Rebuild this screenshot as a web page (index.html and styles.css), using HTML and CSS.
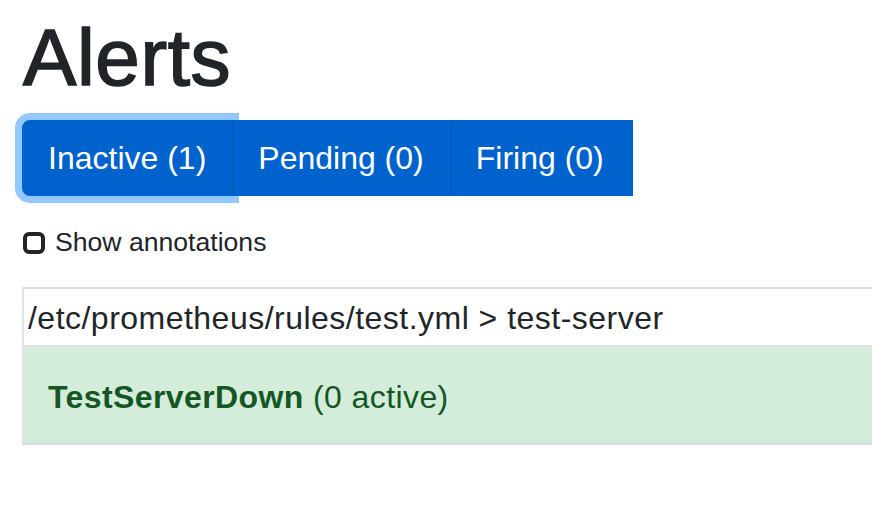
FILE: index.html
```html
<!DOCTYPE html>
<html>
<head>
<meta charset="utf-8">
<link rel="stylesheet" href="styles.css">
</head>
<body>
<main class="page">
  <h1 class="title">Alerts</h1>
  <div class="btn-group">
    <button class="btn btn-focus">Inactive (1)</button>
    <button class="btn">Pending (0)</button>
    <button class="btn btn-last">Firing (0)</button>
  </div>
  <label class="check">
    <span class="check-box"></span>
    <span class="check-label">Show annotations</span>
  </label>
  <table class="rules">
    <tbody>
      <tr class="group-row">
        <td class="group-cell">/etc/prometheus/rules/test.yml &gt; test-server</td>
      </tr>
      <tr class="alert-row">
        <td class="alert-cell"><strong class="alert-name">TestServerDown</strong> (0 active)</td>
      </tr>
    </tbody>
  </table>
</main>
</body>
</html>
```

FILE: styles.css
```css
html, body {
  margin: 0;
  padding: 0;
  overflow: hidden;
  background: #fff;
}

body {
  font-family: "Liberation Sans", Arial, sans-serif;
  color: #212529;
}

.page {
  padding: 10px 0 0 22px;
}

.title {
  margin: 0 0 14px 1px;
  font-size: 80px;
  font-weight: 400;
  line-height: 96px;
  color: #212529;
  -webkit-text-stroke: 1.6px #212529;
  letter-spacing: 0.6px;
}

.btn-group {
  display: flex;
  width: max-content;
}

.btn {
  font-family: inherit;
  font-size: 32px;
  line-height: 48px;
  padding: 12px 24px;
  color: #fff;
  background: #0062cc;
  border: 2px solid #0062cc;
  border-left-color: #005cbf;
  margin: 0;
  cursor: pointer;
  border-radius: 0;
}

.btn-focus {
  border-left-color: #0062cc;
  border-radius: 8px 0 0 8px;
  box-shadow: 0 0 0 7px rgba(38, 143, 255, 0.5);
}

.btn-last {
  padding-right: 27px;
}

.check {
  display: flex;
  align-items: center;
  margin: 35px 0 0 1px;
  height: 23px;
}

.check-box {
  box-sizing: border-box;
  width: 22px;
  height: 22px;
  border: 4px solid #212529;
  border-radius: 6px;
  background: #fff;
}

.check-label {
  margin-left: 10px;
  font-size: 26.6px;
  line-height: 23px;
  color: #212529;
}

.rules {
  margin-top: 33px;
  width: 900px;
  border-collapse: collapse;
}

.rules td {
  border: 2px solid #dee2e6;
  border-right: none;
  text-align: left;
}

.group-cell {
  padding: 5px 4px 3px 4px;
  font-size: 32px;
  line-height: 48px;
  color: #212529;
  letter-spacing: 0.48px;
}

.alert-row {
  background: #d4edda;
}

.alert-cell {
  padding: 26px 24px 22px 24px;
  font-size: 32px;
  line-height: 48px;
  color: #155724;
  letter-spacing: 0.4px;
}

.rules .alert-cell {
  border-bottom-color: #dcdde0;
}

.alert-name {
  font-weight: 700;
}
```
